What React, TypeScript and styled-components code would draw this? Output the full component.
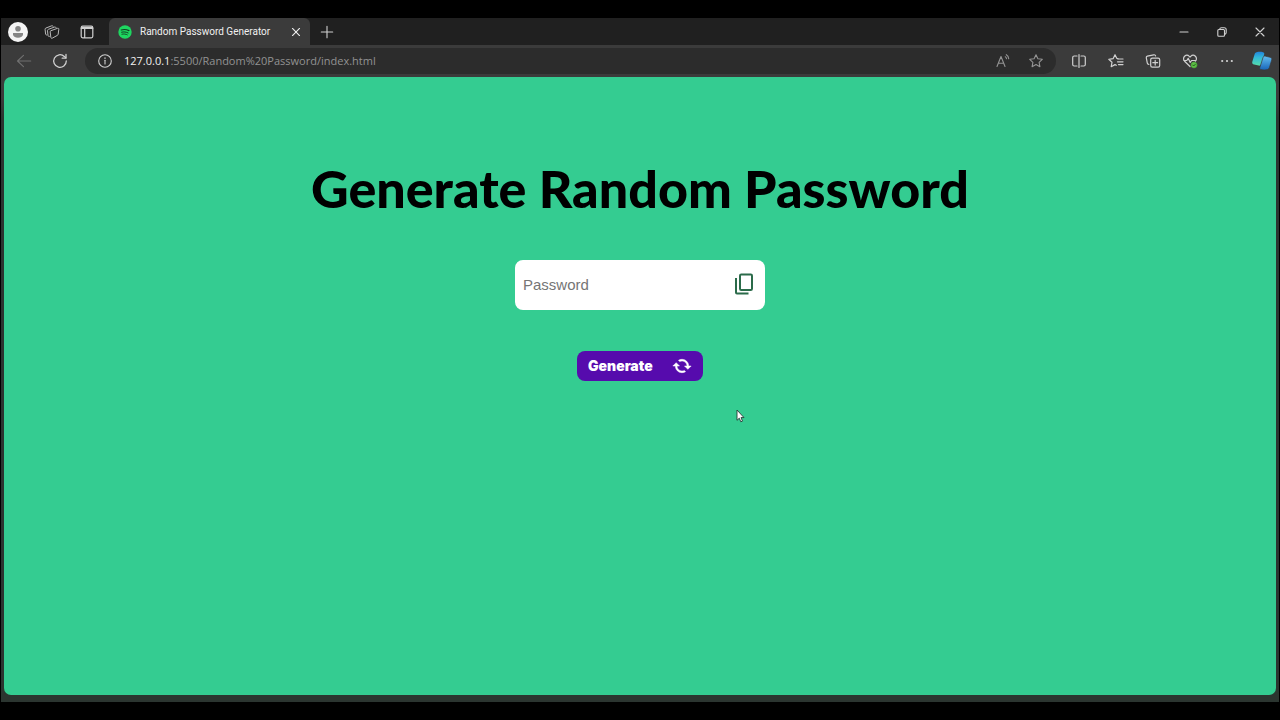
import React from "react";
import styled, { createGlobalStyle } from "styled-components";

const GlobalStyle = createGlobalStyle`
  * { box-sizing: border-box; }
  body { margin: 0; background: #000; }
  button { font: inherit; color: inherit; border: 0; padding: 0; background: none; }
  svg { display: block; flex: none; }
`;

const Screen = styled.div`
  display: flex;
  min-height: 100vh;
  padding: 18px 1px;
  background: #000;
`;

const BrowserWindow = styled.div`
  display: flex;
  flex: 1;
  flex-direction: column;
  min-width: 0;
  background: linear-gradient(#3b3b3b 80px, #2b3530 100px);
  color: #e6e6e6;
  font-family: "Open Sans", "Noto Sans", sans-serif;
`;

const TabStrip = styled.header`
  display: flex;
  align-items: stretch;
  height: 27px;
  background: #202020;
`;

const IconButton = styled.button<{ $width: number; $tone?: string }>`
  display: flex;
  flex: none;
  align-items: center;
  justify-content: center;
  width: ${(p) => p.$width}px;
  color: ${(p) => p.$tone ?? "#d0d0d0"};
`;

const Tab = styled.div`
  display: flex;
  align-items: center;
  width: 201px;
  margin-left: 5px;
  padding: 0 0 0 9px;
  border-radius: 6px 6px 0 0;
  background: #3b3b3b;
`;

const TabTitle = styled.span`
  flex: 1;
  padding-left: 8px;
  color: #f0f0f0;
  font-family: Roboto, "Open Sans", sans-serif;
  font-size: 10px;
  line-height: 16px;
  white-space: nowrap;
`;

const WindowControls = styled.div`
  display: flex;
  margin-left: auto;
`;

const Toolbar = styled.nav`
  display: flex;
  align-items: center;
  height: 32px;
  padding-left: 4px;
`;

const AddressBar = styled.div`
  display: flex;
  flex: 1;
  align-items: center;
  height: 26px;
  margin: 0 4px 0 7px;
  padding-right: 4px;
  border-radius: 13px;
  background: #2c2c2c;
`;

const Url = styled.span`
  flex: 1;
  color: #929292;
  font-size: 11px;
  line-height: 16px;
  white-space: nowrap;
`;

const Host = styled.span`
  color: #f2f2f2;
`;

const Page = styled.main`
  position: relative;
  display: flex;
  flex: 1;
  flex-direction: column;
  align-items: center;
  margin: 0 3px 7px;
  padding-top: 81px;
  border-radius: 7px;
  background: #34cc91;
`;

const Title = styled.h1`
  margin: 0;
  color: #000;
  font-family: Lato, "Gill Sans", sans-serif;
  font-size: 52px;
  font-weight: 900;
  line-height: 60px;
  text-align: center;
`;

const PasswordBox = styled.div`
  display: flex;
  align-items: center;
  width: 250px;
  height: 50px;
  margin-top: 42px;
  padding: 0 7px 2px 0;
  border-radius: 8px;
  background: #fff;
`;

const PasswordInput = styled.input`
  flex: 1;
  min-width: 0;
  height: 46px;
  padding: 0 8px;
  border: 0;
  outline: 0;
  background: transparent;
  color: #222;
  font-family: "Liberation Sans", Arial, sans-serif;
  font-size: 15px;
  &::placeholder {
    color: #757575;
    opacity: 1;
  }
`;

const GenerateButton = styled.button`
  display: flex;
  align-items: center;
  justify-content: space-between;
  width: 126px;
  height: 30px;
  margin-top: 41px;
  padding: 0 11px;
  border-radius: 8px;
  background: #560bad;
  color: #fff;
  font-family: Inter, "Liberation Sans", sans-serif;
  font-size: 14px;
  line-height: 16px;
  font-weight: 900;
`;

const Pointer = styled.svg`
  position: absolute;
  top: 332px;
  left: calc(50% + 96px);
`;

type IconProps = { size?: number; children: React.ReactNode; width?: number };

const LineIcon = ({ size = 16, width = 1.1, children }: IconProps) => (
  <svg
    width={size}
    height={size}
    viewBox="0 0 16 16"
    fill="none"
    stroke="currentColor"
    strokeWidth={width}
    strokeLinecap="round"
    strokeLinejoin="round"
    aria-hidden="true"
  >
    {children}
  </svg>
);

const ProfileIcon = () => (
  <svg width="20" height="20" viewBox="0 0 20 20" aria-hidden="true">
    <circle cx="10" cy="10" r="10" fill="#f4f4f4" />
    <circle cx="10" cy="6.7" r="2.8" fill="#858585" />
    <path d="M5 11h10v1.2c0 2.2-2.2 3.6-5 3.6s-5-1.4-5-3.6z" fill="#858585" />
  </svg>
);

const MusicIcon = () => (
  <svg width="14" height="14" viewBox="0 0 14 14" aria-hidden="true">
    <circle cx="7" cy="7" r="6.7" fill="#1ed760" />
    <g fill="none" stroke="#123d22" strokeLinecap="round">
      <path d="M3.300 5c2.500-.8 5.400-.5 7.600.6" strokeWidth="1.200" />
      <path d="M3.600 7.200c2.200-.6 4.600-.3 6.500.7" strokeWidth="1" />
      <path d="M3.900 9.200c1.800-.5 3.900-.2 5.400.6" strokeWidth=".9" />
    </g>
  </svg>
);

const STAR = "M8 1.700l1.900 4 4.400.6-3.200 3 .8 4.400L8 11.600l-3.900 2.100.8-4.400-3.200-3 4.400-.6z";

export default function App() {
  return (
    <Screen>
      <GlobalStyle />
      <BrowserWindow>
        <TabStrip>
          <IconButton $width={34} aria-label="Profile"><ProfileIcon /></IconButton>
          <IconButton $width={34} aria-label="Workspaces" $tone="#b8b8b8">
            <LineIcon width={1}>
              <path d="M7.200 6.600l6.300-2.300c.8-.3 1.400.1 1.300 1l-.6 4.800c-.1.6-.3 1-.9 1.300l-4.900 2.700c-.8.4-1.500.1-1.600-.8L6.200 8c-.1-.7.300-1.100 1-1.400z" />
              <path d="M5.400 12.400c-.8.200-1.300-.2-1.400-.9l-.5-4.800c-.1-.7.300-1.100 1-1.400l6.100-2.300c.7-.2 1.200 0 1.400.6" />
              <path d="M2.800 11c-.7.100-1.100-.3-1.200-.9L1.100 5.400c-.1-.7.200-1.100.9-1.400l5.700-2.200c.7-.2 1.200 0 1.400.5" />
            </LineIcon>
          </IconButton>
          <IconButton $width={35} aria-label="Tab actions">
            <LineIcon width={1.200}>
              <rect x="2.200" y="2.200" width="11.600" height="11.600" rx="1.500" />
              <path d="M2.200 4.500h11.600M2.400 3.500h11.200M5.700 5v8.500" />
            </LineIcon>
          </IconButton>
          <Tab>
            <MusicIcon />
            <TabTitle>Random Password Generator</TabTitle>
            <IconButton $width={29} aria-label="Close tab" $tone="#eee">
              <LineIcon size={12} width={1.500}><path d="M3.300 3.300l9.400 9.400M12.700 3.300l-9.400 9.400" /></LineIcon>
            </IconButton>
          </Tab>
          <IconButton $width={34} aria-label="New tab">
            <LineIcon><path d="M8 2.300v11.400M2.300 8h11.400" /></LineIcon>
          </IconButton>
          <WindowControls>
            <IconButton $width={38} aria-label="Minimize"><LineIcon><path d="M4 8h8" /></LineIcon></IconButton>
            <IconButton $width={38} aria-label="Restore">
              <LineIcon>
                <rect x="3.800" y="5.500" width="6.700" height="6.700" rx="1" />
                <path d="M5.600 5.300c.2-1 .8-1.500 1.800-1.500h2.800c1.300 0 2 .7 2 2v2.800c0 1-.5 1.600-1.500 1.800" />
              </LineIcon>
            </IconButton>
            <IconButton $width={38} aria-label="Close window">
              <LineIcon><path d="M4 4l8 8M12 4l-8 8" /></LineIcon>
            </IconButton>
          </WindowControls>
        </TabStrip>

        <Toolbar>
          <IconButton $width={37} aria-label="Back" $tone="#707070">
            <LineIcon><path d="M14.700 8H1.500M7.500 2.300L1.500 8l6 5.700" /></LineIcon>
          </IconButton>
          <IconButton $width={36} aria-label="Refresh">
            <LineIcon width={1.300}>
              <path d="M14.300 8a6.300 6.300 0 1 1-2-4.600l1.500 1.500" />
              <path d="M14 1.500v3.700h-3.800" />
            </LineIcon>
          </IconButton>
          <AddressBar>
            <IconButton $width={39} aria-label="Site information">
              <LineIcon>
                <circle cx="8" cy="8" r="6.300" />
                <path d="M8 7.300v3.700" />
                <path d="M8 5v.2" strokeWidth="1.400" />
              </LineIcon>
            </IconButton>
            <Url><Host>127.0.0.1</Host>:5500/Random%20Password/index.html</Url>
            <IconButton $width={33} aria-label="Read aloud" $tone="#949494">
              <LineIcon>
                <path d="M2 13.500L6 3.500l4 10M3.300 10.200h5.400" />
                <path d="M10.300 3.800c.7.400 1.100 1.100 1.200 2M11.300 1.700c1.400.8 2.300 2.300 2.400 4" />
              </LineIcon>
            </IconButton>
            <IconButton $width={33} aria-label="Add to favorites" $tone="#949494">
              <LineIcon><path d={STAR} /></LineIcon>
            </IconButton>
          </AddressBar>
          <IconButton $width={37} aria-label="Split screen">
            <LineIcon width={1.200}>
              <path d="M6 3H3.200c-.9 0-1.500.6-1.500 1.500v7c0 .9.600 1.500 1.500 1.500H6M10 3h2.800c.9 0 1.500.6 1.500 1.500v7c0 .9-.6 1.500-1.500 1.500H10M8 1.500v13" />
            </LineIcon>
          </IconButton>
          <IconButton $width={37} aria-label="Favorites">
            <LineIcon width={1.200}>
              <path d="M10 5.600L8.900 5.500 7 1.700l-1.900 4-4.300.6 3.200 3-.8 4.400L7 11.600l1.300.7" />
              <path d="M10 6h5M9.500 8.800H15M10.500 11.600H15" />
            </LineIcon>
          </IconButton>
          <IconButton $width={37} aria-label="Collections">
            <LineIcon width={1.200}>
              <rect x="5.700" y="5.200" width="9" height="9" rx="1.600" />
              <path d="M10.200 7.300v4.800M7.800 9.700h4.800" />
              <path d="M3.800 11.400c-.8-.1-1.300-.5-1.500-1.300l-1-5.300c-.1-.9.300-1.500 1.100-1.700l6.300-1.300c1-.2 1.700.3 1.900 1.200" />
            </LineIcon>
          </IconButton>
          <IconButton $width={37} aria-label="Browser essentials">
            <LineIcon width={1.200}>
              <path d="M8 13.500L2.600 8.200C1.200 6.700 1.200 4.500 2.600 3.200 4 1.900 6 2 7.300 3.300L8 4l.7-.7c1.300-1.300 3.300-1.400 4.700-.1 1.400 1.300 1.400 3.500 0 5" />
              <path d="M2 7.500h2.800l1.400-2.200 2 4.200 1.400-2h4" />
              <circle cx="12" cy="12" r="3" fill="#5cbf45" stroke="#4ba238" strokeWidth=".5" />
              <path d="M10.700 12l1 1 1.700-1.800" strokeWidth=".8" stroke="#1d4516" />
            </LineIcon>
          </IconButton>
          <IconButton $width={37} aria-label="Settings and more">
            <LineIcon width={2.200}><path d="M3.200 8h.01M8 8h.01M12.800 8h.01" /></LineIcon>
          </IconButton>
          <IconButton $width={34} aria-label="Copilot">
            <svg width="20" height="20" viewBox="0 0 20 20" aria-hidden="true">
              <defs>
                <linearGradient id="pilotLeft" x1="0" y1="0" x2="0" y2="1">
                  <stop offset="0" stopColor="#2185dc" />
                  <stop offset=".4" stopColor="#32b8d8" />
                  <stop offset="1" stopColor="#55dca8" />
                </linearGradient>
                <linearGradient id="pilotRight" x1="0" y1="0" x2="0" y2="1">
                  <stop offset="0" stopColor="#63bdf0" />
                  <stop offset="1" stopColor="#1764b8" />
                </linearGradient>
              </defs>
              <path d="M4.600 1.300c2-.6 4.400-.6 6.400 0 1 .3 1.500 1 1.200 2L9.200 13.300c-.4 1.200-1.300 1.600-2.600 1.300L2 13.500C.5 13.100-.1 12.200.3 10.700L2.600 3.200c.3-1 1-1.600 2-1.900z" fill="url(#pilotLeft)" />
              <path d="M13.600 5.200l4.500 1.100c1.400.4 2 1.300 1.600 2.700l-2.300 7.600c-.3 1-1 1.700-2 2-2 .6-4.300.6-6.400 0-1-.3-1.500-1-1.200-2L11 6.500c.4-1.200 1.300-1.600 2.600-1.300z" fill="url(#pilotRight)" stroke="#3b3b3b" strokeWidth=".7" />
            </svg>
          </IconButton>
        </Toolbar>

        <Page>
          <Title>Generate Random Password</Title>
          <PasswordBox>
            <PasswordInput type="text" placeholder="Password" aria-label="Password" />
            <IconButton $width={28} aria-label="Copy password" $tone="#2b6b4a">
              <svg width="24" height="24" viewBox="0 0 24 24" fill="none" stroke="currentColor" strokeWidth="2" aria-hidden="true">
                <rect x="8" y="2.500" width="12" height="15.500" rx="1.200" />
                <path d="M4 6v14.500c0 .6.400 1 1 1h11.500" />
              </svg>
            </IconButton>
          </PasswordBox>
          <GenerateButton type="button">
            Generate
            <svg width="20" height="20" viewBox="0 0 24 24" aria-hidden="true">
              <path
                d="M5 8l4 4H6c0 3.310 2.690 6 6 6 1.010 0 1.970-.25 2.800-.7l1.460 1.460A7.930 7.930 0 0 1 12 20c-4.420 0-8-3.580-8-8H1zM18 12c0-3.310-2.690-6-6-6-1.010 0-1.970.25-2.800.7L7.740 5.240A7.930 7.930 0 0 1 12 4c4.420 0 8 3.580 8 8h3l-4 4-4-4z"
                fill="currentColor"
                stroke="currentColor"
                strokeWidth=".6"
              />
            </svg>
          </GenerateButton>
          <Pointer width="9" height="14" viewBox="0 0 9 14" aria-hidden="true">
            <path d="M1 1v10.300l2.300-2.100 1.500 3.600 1.700-.7L5 8.600h3z" fill="#fff" stroke="#243b35" strokeWidth=".9" strokeLinejoin="round" />
          </Pointer>
        </Page>
      </BrowserWindow>
    </Screen>
  );
}
